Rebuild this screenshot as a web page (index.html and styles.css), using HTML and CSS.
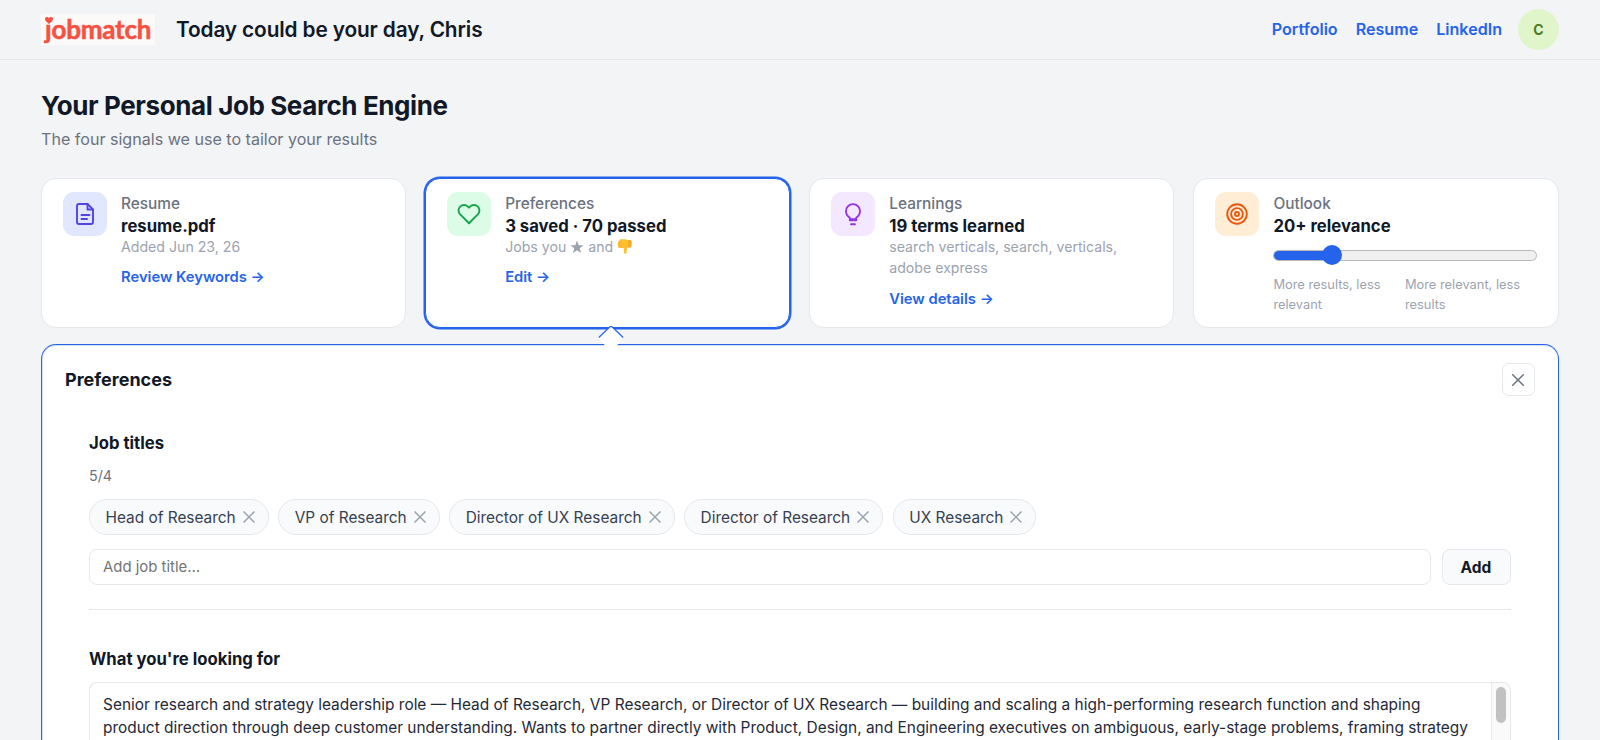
FILE: index.html
```
<!DOCTYPE html>
<html lang="en">
<head>
    <meta charset="UTF-8">
    <meta name="viewport" content="width=device-width, initial-scale=1.0">
    <title>jobmatch</title>
    <link rel="stylesheet" href="styles.css">
</head>
<body>

    <header class="topbar">
        <div class="logo">
            <span class="logo-text">&#x237;obmatch</span>
            <svg class="logo-heart" viewBox="0 0 16 14"><path d="M8 14C3 10 0 7.500 0 4.200 0 1.800 1.800 0 4.100 0 5.700 0 7.200.9 8 2.300 8.800.9 10.300 0 11.900 0 14.200 0 16 1.800 16 4.200 16 7.500 13 10 8 14z" fill="#f9503f"/></svg>
        </div>
        <h1 class="greeting">Today could be your day, Chris</h1>
        <nav class="links">
            <a href="#">Portfolio</a>
            <a href="#">Resume</a>
            <a href="#">LinkedIn</a>
        </nav>
        <div class="avatar">C</div>
    </header>

    <main class="page">
        <h2 class="page-title">Your Personal Job Search Engine</h2>
        <p class="page-sub">The four signals we use to tailor your results</p>

        <section class="cards">
            <div class="card">
                <div class="card-icon icon-resume">
                    <svg viewBox="0 0 24 24"><path d="M14.500 2H6a2 2 0 0 0-2 2v16a2 2 0 0 0 2 2h12a2 2 0 0 0 2-2V7.500z"/><path d="M14.500 2v5.500H20M8.500 13h8M8.500 17h5.500"/></svg>
                </div>
                <div class="card-body">
                    <div class="card-label">Resume</div>
                    <div class="card-value">resume.pdf</div>
                    <div class="card-desc">Added Jun 23, 26</div>
                    <a class="card-link" href="#">Review Keywords →</a>
                </div>
            </div>

            <div class="card active">
                <div class="card-icon icon-prefs">
                    <svg viewBox="0 0 24 24"><path d="M20.840 4.610a5.500 5.500 0 0 0-7.780 0L12 5.670l-1.060-1.060a5.500 5.500 0 0 0-7.780 7.780l1.060 1.060L12 21.230l7.780-7.780 1.060-1.060a5.500 5.500 0 0 0 0-7.780z"/></svg>
                </div>
                <div class="card-body">
                    <div class="card-label">Preferences</div>
                    <div class="card-value">3 saved · 70 passed</div>
                    <div class="card-desc">Jobs you
                        <svg class="star" viewBox="0 0 24 24"><path d="M12 1l2.900 7.800 8.300.3-6.500 5.200 2.300 8L12 17.700l-7 4.600 2.300-8L.8 9.100l8.300-.3z"/></svg>
                        and
                        <svg class="thumb" viewBox="0 0 28 28"><path d="M19 2h5.500c1.500 0 3 1.500 3 6s-1 8-3 8H19z" fill="#f5a623"/><path d="M5 2.500C5.500 1 6.500.5 8 .5h7c2.500 0 4 .5 6 2V15c-1.500.8-2.500 2.500-2.700 4.500-.2 2.500 0 4.500-.6 6.500-.7 2-4 2-4.600-.3-.6-2.500-.4-5.500-.4-8.700H5c-2.800 0-3.600-2.400-2.200-4C.5 12.200.2 10 1.900 8.800.8 7 1.600 5.200 3.400 4.800 3.500 3.800 4 3 5 2.500z" fill="#fdbf2d"/><path d="M2.800 13H7M2.500 8.800h4.500M4.500 4.800H8" fill="none" stroke="#e9a01f" stroke-width="1.200"/></svg>
                    </div>
                    <a class="card-link" href="#">Edit →</a>
                </div>
            </div>

            <div class="card">
                <div class="card-icon icon-learn">
                    <svg viewBox="0 0 24 24"><path d="M8.800 18.300v-2.500C6.500 14.300 5 12.300 5 9.300a7 7.200 0 0 1 14 0c0 3-1.500 5-3.800 6.500v2.500z"/><path d="M9 17.300h6M10 22.300h4"/></svg>
                </div>
                <div class="card-body">
                    <div class="card-label">Learnings</div>
                    <div class="card-value">19 terms learned</div>
                    <div class="card-desc">search verticals, search, verticals, adobe express</div>
                    <a class="card-link" href="#">View details →</a>
                </div>
            </div>

            <div class="card">
                <div class="card-icon icon-outlook">
                    <svg viewBox="0 0 24 24"><circle cx="12" cy="12" r="9.800"/><circle cx="12" cy="12" r="5.900"/><circle cx="12" cy="12" r="2"/></svg>
                </div>
                <div class="card-body">
                    <div class="card-label">Outlook</div>
                    <div class="card-value">20+ relevance</div>
                    <div class="slider">
                        <div class="slider-fill"></div>
                        <div class="slider-thumb"></div>
                    </div>
                    <div class="slider-labels">
                        <span>More results, less relevant</span>
                        <span>More relevant, less results</span>
                    </div>
                </div>
            </div>
        </section>

        <section class="panel">
            <svg class="panel-arrow" viewBox="0 0 26 20"><path d="M0.500 12L13 0l12.500 12-7 8h-11z" fill="#fff"/><path d="M0.800 11.500L12.200.6h1.600L25.200 11.500" fill="none" stroke="#2563eb" stroke-width="1.200"/></svg>
            <div class="panel-head">
                <h3>Preferences</h3>
                <button class="close"><svg viewBox="0 0 12 12"><path d="M.7.7l10.600 10.600M11.300.7L.7 11.300"/></svg></button>
            </div>

            <div class="block titles">
                <h4>Job titles</h4>
                <div class="count">5/4</div>
                <div class="chips">
                    <span class="chip">Head of Research <svg viewBox="0 0 12 12"><path d="M.5.5l11 11M11.500.5l-11 11"/></svg></span>
                    <span class="chip">VP of Research <svg viewBox="0 0 12 12"><path d="M.5.5l11 11M11.500.5l-11 11"/></svg></span>
                    <span class="chip">Director of UX Research <svg viewBox="0 0 12 12"><path d="M.5.5l11 11M11.500.5l-11 11"/></svg></span>
                    <span class="chip">Director of Research <svg viewBox="0 0 12 12"><path d="M.5.5l11 11M11.500.5l-11 11"/></svg></span>
                    <span class="chip">UX Research <svg viewBox="0 0 12 12"><path d="M.5.5l11 11M11.500.5l-11 11"/></svg></span>
                </div>
                <div class="add-row">
                    <input type="text" placeholder="Add job title…">
                    <button>Add</button>
                </div>
            </div>

            <div class="block looking">
                <h4>What you're looking for</h4>
                <div class="textbox">
                    <p>Senior research and strategy leadership role — Head of Research, VP Research, or Director of UX Research — building and scaling a high-performing research function and shaping product direction through deep customer understanding. Wants to partner directly with Product, Design, and Engineering executives on ambiguous, early-stage problems, framing strategy</p>
                    <div class="scroll"><div class="scroll-thumb"></div></div>
                </div>
            </div>
        </section>
    </main>

</body>
</html>
```
FILE: styles.css
```
* {
    box-sizing: border-box;
}

body {
    display: flex;
    flex-direction: column;
    margin: 0;
    height: 740px;
    overflow: hidden;
    background: #f3f4f6;
    color: #111827;
    font-family: Inter, "Liberation Sans", sans-serif;
}

h1, h2, h3, h4, p {
    margin: 0;
}

a {
    color: #2563eb;
    text-decoration: none;
    font-weight: 600;
}

/* top bar */
.topbar {
    display: flex;
    flex: none;
    align-items: center;
    height: 60px;
    padding: 0 41px 1px;
    border-bottom: 1px solid #e5e7eb;
}

.logo {
    position: relative;
    width: 114px;
    height: 31px;
    padding-left: 4px;
    background: #fbfaf8;
}

.logo-text {
    display: block;
    color: #f9503f;
    font-family: Lato, sans-serif;
    font-size: 26px;
    font-weight: 700;
    line-height: 30px;
    letter-spacing: -0.200px;
    -webkit-text-stroke: 0.500px #f9503f;
}

.logo-heart {
    position: absolute;
    left: 4px;
    top: 3px;
    width: 8px;
    height: 7px;
}

.greeting {
    margin-left: 21px;
    font-size: 20.800px;
    font-weight: 600;
    letter-spacing: -0.120px;
}

.links {
    display: flex;
    gap: 18px;
    margin-left: auto;
    font-size: 16.100px;
}

.avatar {
    width: 41px;
    height: 41px;
    margin-left: 16px;
    border-radius: 50%;
    background: #e1f5cb;
    color: #4d7c1f;
    font-size: 14px;
    font-weight: 700;
    line-height: 41px;
    text-align: center;
}

.page {
    display: flex;
    flex: 1;
    flex-direction: column;
    min-height: 0;
    padding: 30px 41.500px 0 41px;
}

.page-title {
    font-size: 26px;
    font-weight: 700;
    line-height: 32px;
    letter-spacing: -0.400px;
}

.page-sub {
    margin-top: 5px;
    color: #6b7280;
    font-size: 16.080px;
    line-height: 24px;
}

/* signal cards */
.cards {
    display: grid;
    grid-template-columns: repeat(4, 1fr);
    gap: 19px;
    margin-top: 27px;
}

.card {
    display: flex;
    gap: 14px;
    height: 150px;
    padding: 13px 21px;
    border: 1px solid #e5e7eb;
    border-radius: 15px;
    background: #fff;
}

.card.active {
    border-color: #2563eb;
    box-shadow: 0 0 0 1.500px #2563eb;
}

.card-icon {
    display: flex;
    flex: none;
    align-items: center;
    justify-content: center;
    width: 44px;
    height: 44px;
    border-radius: 11px;
}

.card-icon svg {
    width: 24px;
    height: 24px;
    fill: none;
    stroke: currentColor;
    stroke-width: 1.900;
    stroke-linecap: round;
    stroke-linejoin: round;
}

.icon-resume { background: #e0e7ff; color: #4f46e5; }
.icon-prefs { background: #dcfce7; color: #16a34a; }
.icon-learn { background: #f3e8ff; color: #9333ea; }
.icon-outlook { background: #ffedd5; color: #ea580c; }

.card-body {
    flex: 1;
}

.card-label {
    color: #6b7280;
    font-size: 15.400px;
    font-weight: 500;
    line-height: 23px;
}

.card-value {
    font-size: 16.700px;
    font-weight: 700;
    line-height: 22px;
}

.card-desc {
    margin-top: -1px;
    color: #9ca3af;
    font-size: 14.150px;
    line-height: 21.300px;
}

.star,
.thumb {
    width: 14px;
    height: 14px;
    fill: #9ca3af;
    vertical-align: -2px;
}

.thumb {
    width: 15px;
    height: 15px;
}

.card-link {
    display: block;
    margin-top: 10px;
    font-size: 14.750px;
    line-height: 21px;
}

/* relevance slider */
.slider {
    position: relative;
    height: 11px;
    margin-top: 13px;
    border: 1px solid #b8b8b8;
    border-radius: 6px;
    background: #efefef;
}

.slider-fill {
    width: 60px;
    height: 9px;
    border-radius: 5px 0 0 5px;
    background: #2563eb;
}

.slider-thumb {
    position: absolute;
    left: 48px;
    top: -6px;
    width: 20px;
    height: 20px;
    border-radius: 50%;
    background: #2563eb;
}

.slider-labels {
    display: grid;
    grid-template-columns: 1fr 1fr;
    margin-top: 14px;
    color: #9ca3af;
    font-size: 12.850px;
    line-height: 19.500px;
}

/* open panel */
.panel {
    position: relative;
    flex: 1;
    min-height: 0;
    margin-top: 16px;
    padding: 18px 23px 0;
    border: 1px solid #2563eb;
    border-bottom: 0;
    border-radius: 15px 15px 0 0;
    background: #fff;
    box-shadow: inset 0 1px 0 0 rgba(37, 99, 235, 0.2), inset 1px 0 0 0 rgba(37, 99, 235, 0.2);
}

.panel-arrow {
    position: absolute;
    left: 556px;
    top: -19px;
    width: 26px;
    height: 20px;
}

.panel-head {
    display: flex;
    align-items: center;
    justify-content: space-between;
}

.panel-head h3 {
    font-size: 18px;
    font-weight: 700;
}

.close {
    width: 33px;
    height: 33px;
    padding: 0;
    border: 1px solid #e5e7eb;
    border-radius: 7px;
    background: #fff;
}

.close svg {
    display: block;
    width: 12px;
    height: 12px;
    margin: auto;
    stroke: #6b7280;
    stroke-width: 1.500;
    stroke-linecap: round;
}

.block {
    margin: 0 24px;
}

.block h4 {
    font-size: 16.700px;
    font-weight: 700;
    line-height: 24px;
}

.titles {
    margin-top: 35px;
    padding-bottom: 24px;
    border-bottom: 1px solid #e5e7eb;
}

.count {
    margin-top: 10px;
    color: #6b7280;
    font-size: 14.300px;
    line-height: 22px;
}

.chips {
    display: flex;
    gap: 9.500px;
    margin-top: 12px;
}

.chip {
    display: flex;
    align-items: center;
    gap: 7px;
    height: 36px;
    padding: 0 13px 0 15.500px;
    border: 1px solid #e5e7eb;
    border-radius: 18px;
    background: #f9fafb;
    color: #374151;
    font-size: 15.400px;
}

.chip svg {
    width: 12px;
    height: 12px;
    stroke: #9ca3af;
    stroke-width: 1.500;
}

.add-row {
    display: flex;
    gap: 10.500px;
    margin-top: 14px;
}

.add-row input,
.add-row button {
    height: 36px;
    border: 1px solid #e5e7eb;
    border-radius: 8px;
    font-family: inherit;
    font-size: 15.500px;
}

.add-row input {
    flex: 1;
    padding: 0 13px;
    font-size: 14.900px;
}

.add-row input::placeholder {
    color: #757575;
}

.add-row button {
    width: 69px;
    background: #f9fafb;
    color: #111827;
    font-weight: 700;
}

.looking {
    margin-top: 37px;
}

.textbox {
    display: flex;
    height: 58px;
    margin-top: 11px;
    border: 1px solid #e5e7eb;
    border-bottom: 0;
    border-radius: 8px 8px 0 0;
}

.textbox p {
    flex: 1;
    padding: 10px 13px 0;
    color: #1f2937;
    font-size: 15.450px;
    line-height: 23.200px;
}

.scroll {
    width: 19px;
    padding: 4px 4px 0;
    border-left: 1px solid #ebebeb;
    border-radius: 0 7px 0 0;
    background: #fafafa;
}

.scroll-thumb {
    width: 10px;
    height: 36px;
    border-radius: 5px;
    background: #c1c1c1;
}
```
